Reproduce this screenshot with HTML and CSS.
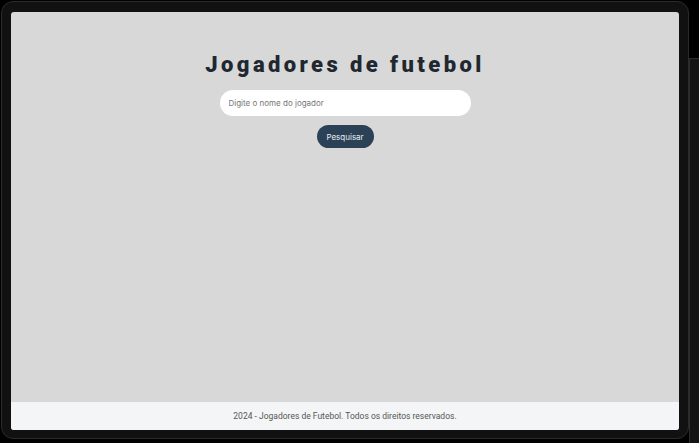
FILE: index.html
```html
<!DOCTYPE html>
<html lang="pt">
<head>
<meta charset="utf-8">
<title>Jogadores de futebol</title>
<link rel="stylesheet" href="styles.css">
</head>
<body>
<div class="backdrop-window"></div>
<div class="frame">
  <div class="screen">
    <main class="main">
      <h1 class="title">Jogadores de futebol</h1>
      <form class="search" onsubmit="return false">
        <input class="search-input" type="text" placeholder="Digite o nome do jogador">
        <button class="search-btn" type="submit">Pesquisar</button>
      </form>
    </main>
    <footer class="footer">2024 - Jogadores de Futebol. Todos os direitos reservados.</footer>
  </div>
</div>
</body>
</html>
```
FILE: styles.css
```css
html, body {
  margin: 0;
  padding: 0;
  background: #000;
  width: 699px;
  height: 443px;
  overflow: hidden;
}
body {
  position: relative;
  font-family: Roboto, "Liberation Sans", sans-serif;
}
.backdrop-window {
  position: absolute;
  left: 689px;
  top: 58px;
  width: 40px;
  height: 385px;
  box-sizing: border-box;
  background: #141414;
  border: 1px solid #2c2c2c;
  border-bottom: none;
}
.frame {
  position: relative;
  margin: 1px 0 0 1px;
  width: 668px;
  height: 418px;
  padding: 10px 9px 8px 9px;
  background: #111;
  border: 1px solid #2b2b2b;
  border-radius: 12px;
}
.screen {
  width: 668px;
  height: 418px;
  background: #d8d8d8;
  border-radius: 3px;
  display: flex;
  flex-direction: column;
  overflow: hidden;
}
.main {
  flex: 1;
  display: flex;
  flex-direction: column;
  align-items: center;
  padding-top: 40px;
}
.title {
  margin: 0;
  font-family: Roboto, sans-serif;
  font-weight: 900;
  font-size: 22px;
  line-height: 26px;
  letter-spacing: 3.4px;
  color: #1f2830;
}
.search {
  display: flex;
  flex-direction: column;
  align-items: center;
  margin-top: 12px;
}
.search-input {
  box-sizing: border-box;
  width: 251px;
  height: 26px;
  border: none;
  border-radius: 13px;
  background: #fff;
  padding: 0 9px;
  font-family: Inter, Roboto, sans-serif;
  font-size: 8px;
  color: #333;
  outline: none;
}
.search-input::placeholder {
  color: #767676;
}
.search-btn {
  margin-top: 9px;
  width: 57px;
  height: 23px;
  border: none;
  border-radius: 12px;
  background: #2b4256;
  color: #e8edf2;
  font-family: Inter, Roboto, sans-serif;
  font-size: 8px;
  padding: 0;
}
.footer {
  height: 28px;
  background: #f4f5f6;
  display: flex;
  align-items: center;
  justify-content: center;
  font-family: Roboto, sans-serif;
  font-size: 8.5px;
  color: #555;
}
```
